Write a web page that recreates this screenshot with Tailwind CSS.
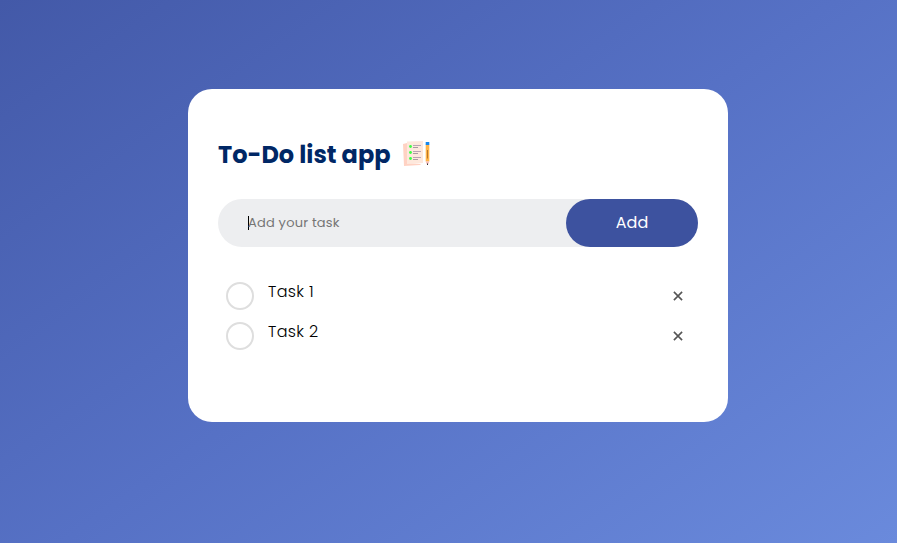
<!DOCTYPE html>
<html lang="en">
<head>
<meta charset="utf-8">
<title>To-Do list app</title>
<script src="https://cdn.jsdelivr.net/npm/@tailwindcss/browser@4"></script>
</head>
<body class="min-h-screen bg-[linear-gradient(145deg,#4359a8,#5671c5_50%,#6a8adc)] pt-[89px] pl-[188px] font-['Poppins','Inter',sans-serif]">
<main class="h-[333px] w-[540px] rounded-3xl bg-white px-[30px] pt-12">
  <h1 class="flex h-9 items-center whitespace-nowrap text-2xl font-bold text-[#002765]">
    <span class="w-[185px]">To-Do list app</span>
    <svg class="h-[30px] w-[30px]" viewBox="0 0 30 30" fill="none">
      <path d="M0 4 4 3v20l14 1-1 1-16 1z" fill="#ffd2c3"/>
      <path d="M4 1.5 20 1v22L4 24z" fill="#fee8dc"/>
      <g fill="#3aff43"><circle cx="7.5" cy="6.5" r="1.4"/><circle cx="7.5" cy="12.5" r="1.4"/><circle cx="7.5" cy="18.5" r="1.4"/></g>
      <path d="M10 5.5h8M10 11.5h8M10 17.5h8" stroke="#b9a4b4"/>
      <path d="M10 7.5h5M10 13.5h5M10 19.5h5" stroke="#a99aa0"/>
      <path d="M22.7 4.5h3.6v17h-3.6z" fill="#ffb449"/>
      <path d="M24.5 10v8.500" stroke="#b9782c"/>
      <path d="M22.700 2h3.6v3h-3.6z" fill="#1687ed"/>
      <path d="M22.7 21.500h3.6l-1.3 3h-1z" fill="#f5b9b8"/><path d="M24 23.500h1v1.500h-1z" fill="#333"/>
    </svg>
  </h1>
  <div class="mt-[26px] flex h-12 items-center rounded-full bg-[#edeef0] pl-[30px]">
    <span class="h-[14px] w-px bg-black"></span>
    <span class="-ml-px flex-1 whitespace-nowrap text-[13px] leading-5 tracking-[0.2px] text-[#757575]">Add your task</span>
    <button class="h-12 w-[132px] rounded-full bg-[#3d529f] text-base text-white">Add</button>
  </div>
  <ul class="mt-[25px] text-base font-light tracking-[0.35px] text-black">
    <li class="flex h-10">
      <span class="mt-[10px] ml-2 size-7 rounded-full border-2 border-[#dedede]"></span>
      <span class="ml-[14px] flex-1 pt-2 leading-6">Task 1</span>
      <svg class="mt-[19px] mr-[15px] size-[10px]" viewBox="0 0 10 10"><path d="m.9.9 8.200 8.200M9.100.9.9 9.100" stroke="#555" stroke-width="1.600"/></svg>
    </li>
    <li class="flex h-10">
      <span class="mt-[10px] ml-2 size-7 rounded-full border-2 border-[#dedede]"></span>
      <span class="ml-[14px] flex-1 pt-2 leading-6">Task 2</span>
      <svg class="mt-[19px] mr-[15px] size-[10px]" viewBox="0 0 10 10"><path d="m.9.9 8.200 8.200M9.100.9.9 9.100" stroke="#555" stroke-width="1.600"/></svg>
    </li>
  </ul>
</main>
</body>
</html>
